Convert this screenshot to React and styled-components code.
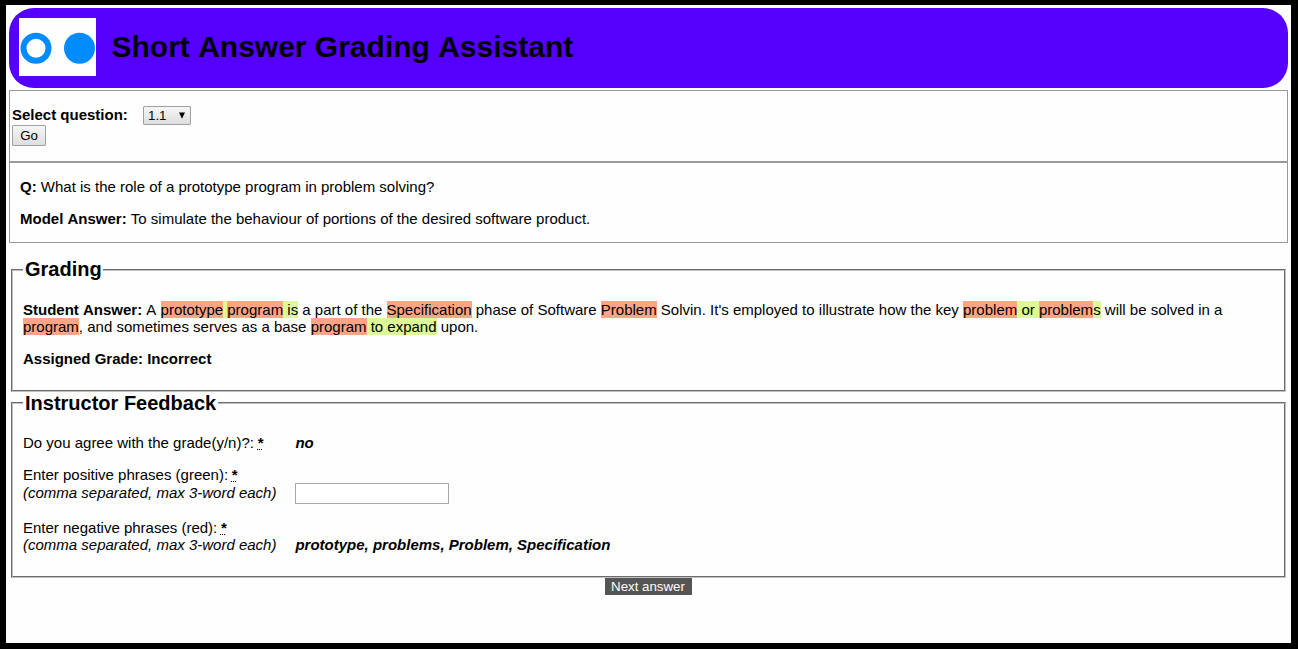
import React from "react";
import styled, { createGlobalStyle } from "styled-components";

const Global = createGlobalStyle`
  * { box-sizing: border-box; }
  body { margin: 0; background: #000; overflow: hidden; }
`;

const Page = styled.div`
  height: 649px;
  padding: 5px 7px 6px 6px;
  background: #000;
  font: 15px/17px "Liberation Sans", Arial, sans-serif;
  font-kerning: none;
  color: #000;
`;

const Sheet = styled.main`
  height: 638px;
  padding: 3px;
  background: #fefefe;
`;

const Header = styled.header`
  display: flex;
  align-items: flex-start;
  height: 80px;
  padding: 10px;
  margin-bottom: 2px;
  border-radius: 25px;
  background: #5500ff;
`;

const Logo = styled.svg`
  display: block;
  width: 77px;
  height: 58px;
  background: #fefefe;
`;

const Title = styled.h1`
  margin: 11px 0 0 15.5px;
  font-size: 30px;
  line-height: 35px;
  font-weight: bold;
  white-space: nowrap;
`;

const Panel = styled.section`
  height: ${(p) => p.$height}px;
  padding: ${(p) => p.$padding};
  border: 1px solid #999;
`;

const PickerRow = styled.div`
  display: flex;
  align-items: flex-start;
  height: 19px;
`;

const PickerLabel = styled.label`
  width: 131px;
  font-weight: bold;
`;

const Picker = styled.button`
  display: flex;
  justify-content: space-between;
  align-items: center;
  width: 48px;
  height: 19px;
  padding: 0 5px 0 4px;
  border: 1px solid #a0a0a0;
  border-radius: 1px;
  background: linear-gradient(#f6f6f6, #dedede);
  font: 13.3px/15px "Liberation Sans", Arial, sans-serif;
  color: #000;
`;

const Arrow = styled.svg`
  width: 6px;
  height: 7px;
  margin-bottom: 1px;
`;

const GoButton = styled.button`
  display: block;
  width: 34px;
  height: 21px;
  padding: 0;
  border: 1px solid #a0a0a0;
  border-radius: 1px;
  background: linear-gradient(#f6f6f6, #dedede);
  font: 13.3px/15px "Liberation Sans", Arial, sans-serif;
  color: #000;
`;

const Paragraph = styled.p`
  margin: 0 0 15px;
`;

const Kerned = styled.span`
  font-kerning: normal;
`;

const Group = styled.fieldset`
  height: ${(p) => p.$height}px;
  margin: ${(p) => p.$top}px 2px 0;
  padding: 20px 10px 0;
  border: 2px groove #c0c0c0;
`;

const Legend = styled.legend`
  height: ${(p) => p.$height}px;
  padding: 0 1.5px 0 2px;
  font-size: 20px;
  line-height: 23px;
  font-weight: bold;
`;

const Mark = styled.span`
  background: ${(p) => (p.$tone === "bad" ? "#ffa585" : "#dcfa96")};
`;

const Field = styled.div`
  display: grid;
  grid-template-columns: 272px 1fr;
  align-items: end;
  margin-bottom: ${(p) => p.$gap}px;
`;

const Hint = styled.em`
  display: block;
  margin-top: ${(p) => p.$offset || 0}px;
`;

const Required = styled.abbr`
  margin-left: -0.5px;
  font-weight: bold;
  text-decoration: underline dotted 1px;
`;

const Value = styled.strong`
  padding-left: 0.4px;
  font-style: italic;
`;

const TextInput = styled.input`
  width: 154px;
  height: 21px;
  margin-bottom: -3px;
  padding: 1px;
  border: 1px solid #a9a9a9;
  background: #fff;
`;

const Footer = styled.footer`
  display: flex;
  justify-content: center;
`;

const NextButton = styled.button`
  width: 87px;
  height: 17px;
  padding: 0 1px 0 0;
  border: 0;
  background: #555;
  color: #fefefe;
  font: 13.3px/17px "Liberation Sans", Arial, sans-serif;
`;

const answer = [
  ["A "],
  ["prototype", "bad"],
  [" ", "good"],
  ["program", "bad"],
  [" is", "good"],
  [" a part of the "],
  ["Specification", "bad"],
  [" phase of Software "],
  ["Problem", "bad"],
  [" Solvin. It's employed to illustrate how the key "],
  ["problem", "bad"],
  [" or ", "good"],
  ["problem", "bad"],
  ["s", "good"],
  [" will be solved in a "],
  ["program", "bad"],
  [", and sometimes serves as a base "],
  ["program", "bad"],
  [" to expand", "good"],
  [" upon."],
];

export default function App() {
  return (
    <Page>
      <Global />
      <Sheet>
        <Header>
          <Logo viewBox="0 0 77 58">
            <circle cx="17" cy="30.3" r="12.5" fill="none" stroke="#008cff" strokeWidth="6" />
            <circle cx="60.5" cy="30.3" r="15.5" fill="#008cff" />
          </Logo>
          <Title>Short Answer Grading Assistant</Title>
        </Header>

        <Panel $height={72} $padding="15px 2px 0">
          <PickerRow>
            <PickerLabel>Select question:</PickerLabel>
            <Picker type="button">
              1.1
              <Arrow viewBox="0 0 6 7">
                <path d="M0 0.5h6L3 6.8z" />
              </Arrow>
            </Picker>
          </PickerRow>
          <GoButton type="button">Go</GoButton>
        </Panel>

        <Panel $height={81} $padding="15px 10px 0">
          <Paragraph>
            <b>Q:</b> What is the role of a prototype program in problem solving?
          </Paragraph>
          <Paragraph>
            <b>Model Answer:</b> <Kerned>To</Kerned> simulate the behaviour of portions of the desired software product.
          </Paragraph>
        </Panel>

        <Group $height={134} $top={15}>
          <Legend $height={23}>Grading</Legend>
          <Paragraph>
            <b>Student Answer:</b>{" "}
            {answer.map(([text, tone], i) =>
              tone ? (
                <Mark key={i} $tone={tone}>{text}</Mark>
              ) : (
                <React.Fragment key={i}>{text}</React.Fragment>
              )
            )}
          </Paragraph>
          <Paragraph>
            <b>Assigned Grade: Incorrect</b>
          </Paragraph>
        </Group>

        <Group $height={186} $top={0}>
          <Legend $height={22}>Instructor Feedback</Legend>
          <Field $gap={15}>
            <span>
              Do you agree with the grade(y/n)?: <Required title="required">*</Required>
            </span>
            <Value>no</Value>
          </Field>
          <Field $gap={18}>
            <span>
              Enter positive phrases (green): <Required title="required">*</Required>
              <Hint $offset={1}>(comma separated, max 3-word each)</Hint>
            </span>
            <TextInput type="text" />
          </Field>
          <Field $gap={0}>
            <span>
              Enter negative phrases (red): <Required title="required">*</Required>
              <Hint>(comma separated, max 3-word each)</Hint>
            </span>
            <Value>prototype, problems, Problem, Specification</Value>
          </Field>
        </Group>

        <Footer>
          <NextButton type="button">Next answer</NextButton>
        </Footer>
      </Sheet>
    </Page>
  );
}
